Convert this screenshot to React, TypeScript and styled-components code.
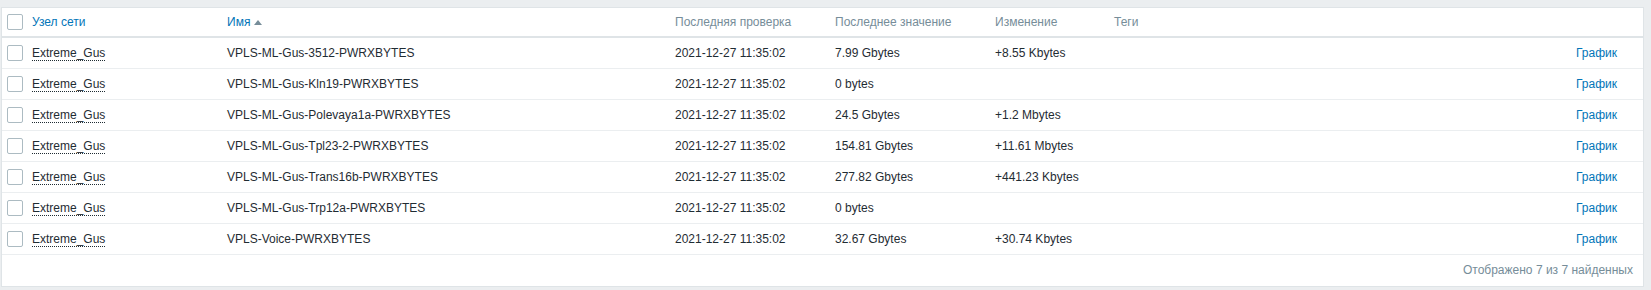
import styled, { createGlobalStyle } from 'styled-components'

const GlobalStyle = createGlobalStyle`
  html, body {
    margin: 0;
    padding: 0;
    background: #ebeef0;
  }
  body {
    font-family: "Liberation Sans", Arial, sans-serif;
    font-size: 12px;
    color: #1f2c33;
  }
`

const rows = [
  { name: 'VPLS-ML-Gus-3512-PWRXBYTES', value: '7.99 Gbytes', change: '+8.55 Kbytes' },
  { name: 'VPLS-ML-Gus-Kln19-PWRXBYTES', value: '0 bytes', change: '' },
  { name: 'VPLS-ML-Gus-Polevaya1a-PWRXBYTES', value: '24.5 Gbytes', change: '+1.2 Mbytes' },
  { name: 'VPLS-ML-Gus-Tpl23-2-PWRXBYTES', value: '154.81 Gbytes', change: '+11.61 Mbytes' },
  { name: 'VPLS-ML-Gus-Trans16b-PWRXBYTES', value: '277.82 Gbytes', change: '+441.23 Kbytes' },
  { name: 'VPLS-ML-Gus-Trp12a-PWRXBYTES', value: '0 bytes', change: '' },
  { name: 'VPLS-Voice-PWRXBYTES', value: '32.67 Gbytes', change: '+30.74 Kbytes' },
]

export default function App() {
  return (
    <Page>
      <GlobalStyle />
      <Panel>
        <Table>
          <colgroup>
            <col style={{ width: 25 }} />
            <col style={{ width: 195 }} />
            <col style={{ width: 448 }} />
            <col style={{ width: 160 }} />
            <col style={{ width: 160 }} />
            <col style={{ width: 119 }} />
            <col />
            <col style={{ width: 60 }} />
            <col style={{ width: 21 }} />
          </colgroup>
          <thead>
            <tr>
              <Th><Checkbox /></Th>
              <Th><HeadLink>Узел сети</HeadLink></Th>
              <Th>
                <HeadLink>Имя</HeadLink>
                <SortArrow />
              </Th>
              <Th>Последняя проверка</Th>
              <Th>Последнее значение</Th>
              <Th>Изменение</Th>
              <Th>Теги</Th>
              <Th />
              <Th />
            </tr>
          </thead>
          <tbody>
            {rows.map((r) => (
              <tr key={r.name}>
                <Td><Checkbox /></Td>
                <Td><HostLink>Extreme_Gus</HostLink></Td>
                <Td>{r.name}</Td>
                <Td>2021-12-27 11:35:02</Td>
                <Td>{r.value}</Td>
                <Td>{r.change}</Td>
                <Td />
                <Td $right><GraphLink>График</GraphLink></Td>
                <Td />
              </tr>
            ))}
          </tbody>
        </Table>
        <Footer>Отображено 7 из 7 найденных</Footer>
      </Panel>
    </Page>
  )
}

const Page = styled.div`
  padding: 7px 7px 0 1px;
`

const Panel = styled.div`
  background: #fff;
  border: 1px solid #dfe4e7;
`

const Table = styled.table`
  width: 100%;
  table-layout: fixed;
  border-collapse: collapse;
  border-spacing: 0;
`

const Th = styled.th`
  height: 28px;
  padding: 0 5px;
  text-align: left;
  font-weight: normal;
  color: #768d99;
  white-space: nowrap;
  vertical-align: middle;
  border-bottom: 2px solid #dfe4e7;
  line-height: 14px;
`

const Td = styled.td<{ $right?: boolean }>`
  height: 30px;
  padding: 0 5px;
  text-align: ${(p) => (p.$right ? 'right' : 'left')};
  white-space: nowrap;
  vertical-align: middle;
  border-bottom: 1px solid #ebeef0;
  line-height: 14px;
`

const Checkbox = styled.span`
  display: block;
  width: 14px;
  height: 14px;
  border: 1px solid #acbbc2;
  border-radius: 2px;
  background: #fff;
`

const HeadLink = styled.span`
  color: #0275b8;
`

const SortArrow = styled.span`
  display: inline-block;
  margin-left: 4px;
  width: 0;
  height: 0;
  border-left: 4px solid transparent;
  border-right: 4px solid transparent;
  border-bottom: 5px solid #768d99;
  vertical-align: 1px;
`

const HostLink = styled.span`
  color: #1f2c33;
  border-bottom: 1px dotted #1f2c33;
`

const GraphLink = styled.span`
  color: #0275b8;
`

const Footer = styled.div`
  height: 31px;
  line-height: 31px;
  padding: 0 10px;
  text-align: right;
  color: #768d99;
`
